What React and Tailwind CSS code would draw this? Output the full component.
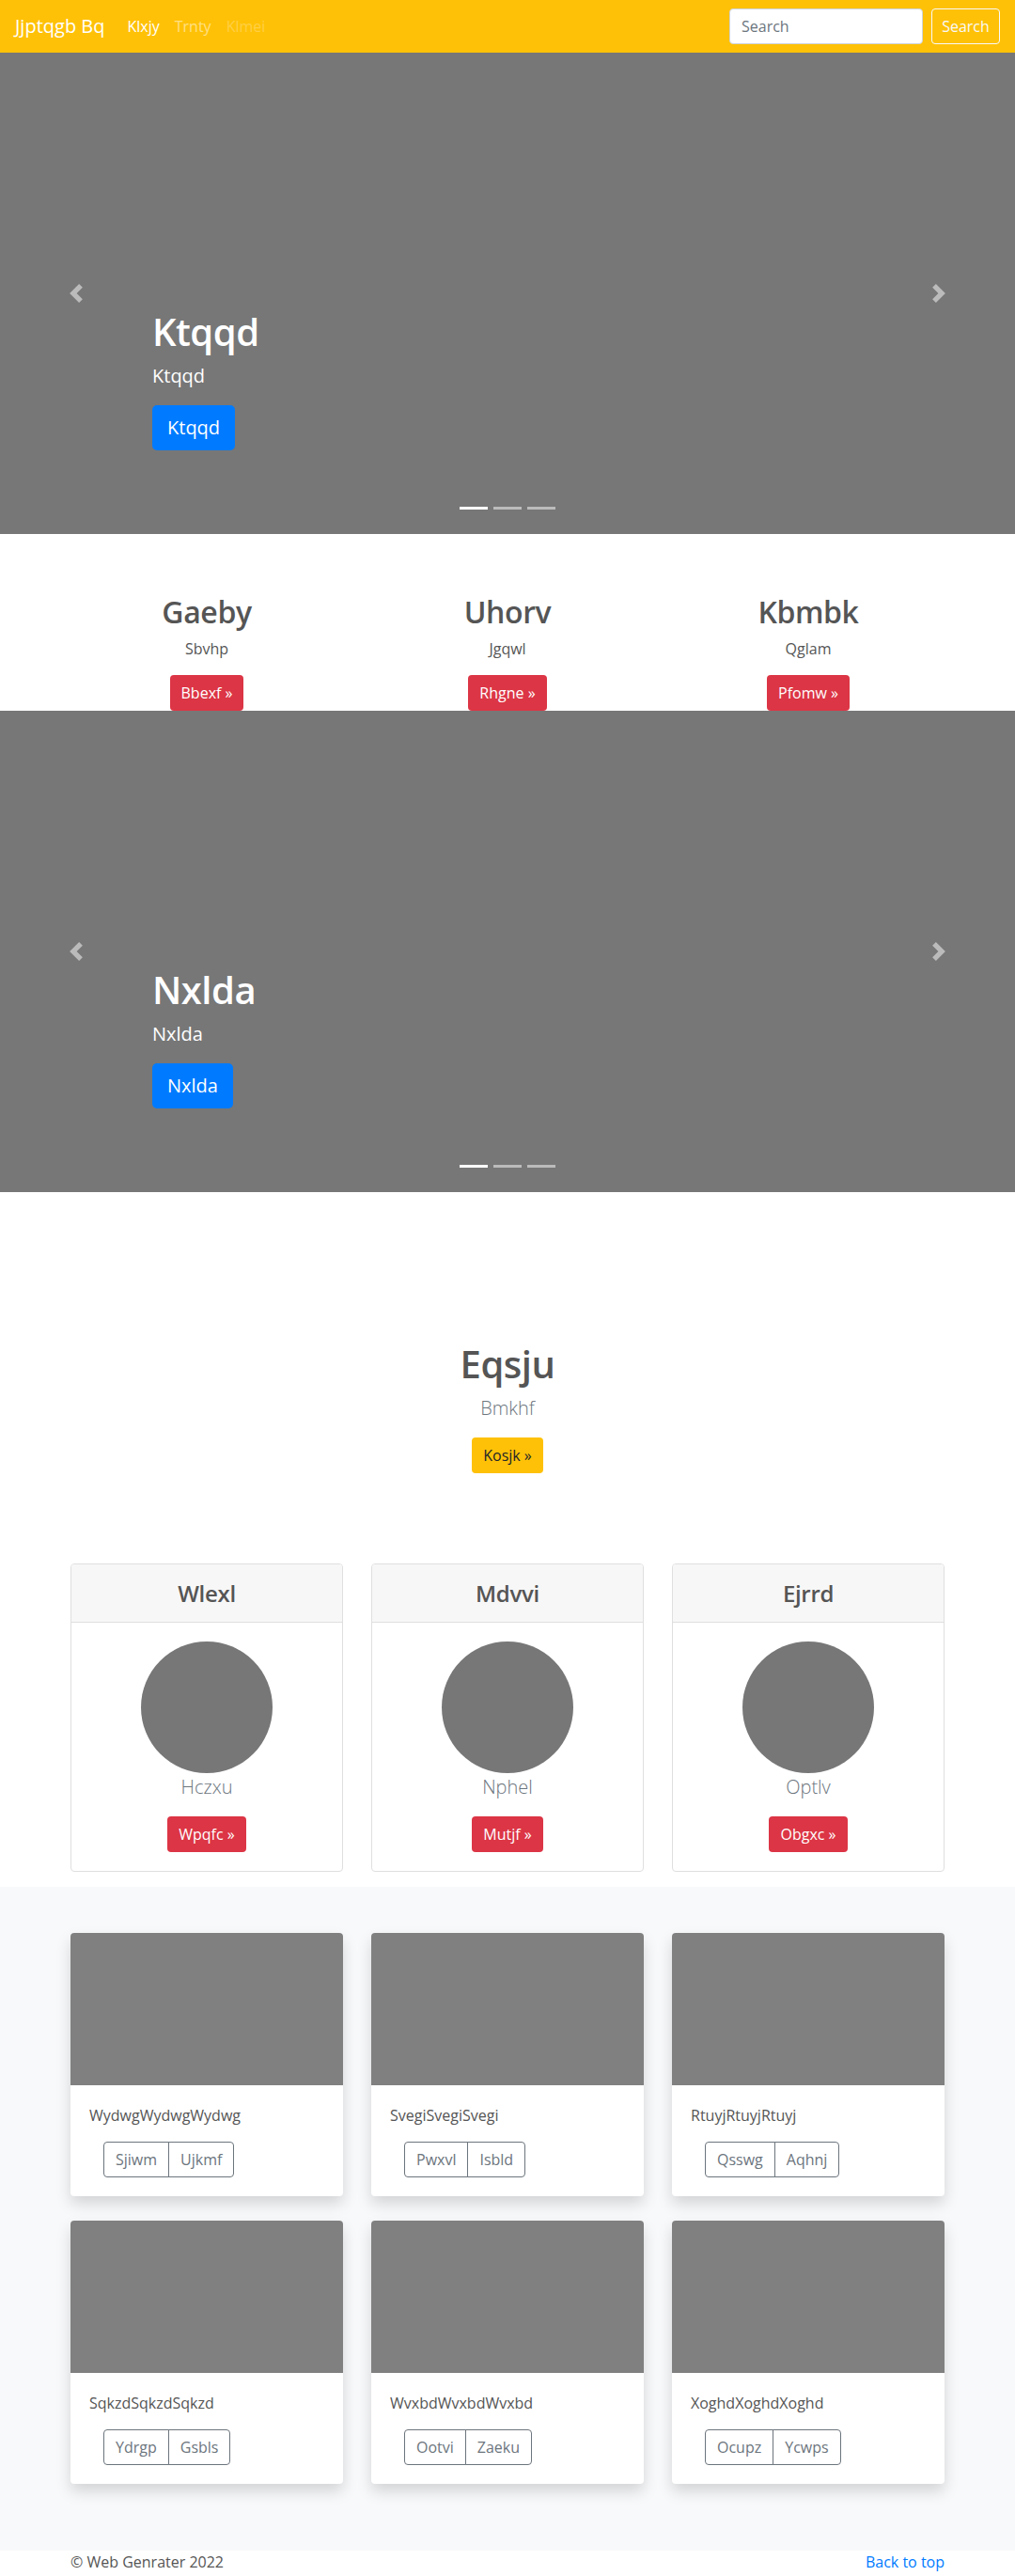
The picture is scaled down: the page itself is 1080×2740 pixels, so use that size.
import React from "react";

const FONT = "font-['Open_Sans','Noto_Sans','Liberation_Sans',sans-serif]";

function Chevron({ dir }) {
  return (
    <svg width="20" height="20" viewBox="0 0 8 8" fill="#fff" className="opacity-50">
      {dir === "left" ? (
        <path d="M5.25 0l-4 4 4 4 1.5-1.5-2.5-2.5 2.5-2.5-1.5-1.5z" />
      ) : (
        <path d="M2.75 0l-1.5 1.5 2.5 2.5-2.5 2.5 1.5 1.5 4-4-4-4z" />
      )}
    </svg>
  );
}

function Carousel({ title }) {
  return (
    <div className="relative h-[512px] bg-[#777] overflow-hidden">
      <div className="absolute left-0 top-0 h-full w-[15%] flex items-center justify-center">
        <Chevron dir="left" />
      </div>
      <div className="absolute right-0 top-0 h-full w-[15%] flex items-center justify-center">
        <Chevron dir="right" />
      </div>
      <div className="absolute left-[15%] right-[15%] top-[273px] text-left text-white">
        <h1 className="text-[40px] leading-[48px] font-semibold mb-2 tracking-[-0.5px]">{title}</h1>
        <p className="text-[20px] leading-[30px] mb-4">{title}</p>
        <span className="inline-flex items-center h-[48px] px-4 rounded-[5px] bg-[#007bff] text-[20px] text-white">
          {title}
        </span>
      </div>
      <div className="absolute left-0 right-0 top-[483px] flex justify-center gap-[6px]">
        <span className="w-[30px] h-[3px] bg-white" />
        <span className="w-[30px] h-[3px] bg-white/50" />
        <span className="w-[30px] h-[3px] bg-white/50" />
      </div>
    </div>
  );
}

function RedBtn({ children }) {
  return (
    <span className="inline-flex items-center h-[38px] px-3 rounded bg-[#dc3545] text-white text-[16px]">
      {children} &raquo;
    </span>
  );
}

const marketing = [
  ["Gaeby", "Sbvhp", "Bbexf"],
  ["Uhorv", "Jgqwl", "Rhgne"],
  ["Kbmbk", "Qglam", "Pfomw"],
];

const pricing = [
  ["Wlexl", "Hczxu", "Wpqfc"],
  ["Mdvvi", "Nphel", "Mutjf"],
  ["Ejrrd", "Optlv", "Obgxc"],
];

const album = [
  ["WydwgWydwgWydwg", "Sjiwm", "Ujkmf"],
  ["SvegiSvegiSvegi", "Pwxvl", "Isbld"],
  ["RtuyjRtuyjRtuyj", "Qsswg", "Aqhnj"],
  ["SqkzdSqkzdSqkzd", "Ydrgp", "Gsbls"],
  ["WvxbdWvxbdWvxbd", "Ootvi", "Zaeku"],
  ["XoghdXoghdXoghd", "Ocupz", "Ycwps"],
];

export default function App() {
  return (
    <div className={`${FONT} w-[1080px] min-h-[2740px] bg-white text-[16px] leading-[24px] text-[#555]`}>
      {/* Navbar */}
      <nav className="h-[56px] bg-[#ffc107] flex items-center px-4">
        <span className="text-[20px] leading-[30px] text-white mr-4">Jjptqgb Bq</span>
        <ul className="flex items-center">
          <li className="px-2 text-white">Klxjy</li>
          <li className="px-2 text-white/50">Trnty</li>
          <li className="px-2 text-white/25">Klmei</li>
        </ul>
        <div className="ml-auto flex items-center">
          <input
            placeholder="Search"
            className="w-[206px] h-[38px] rounded border border-[#ced4da] bg-white px-3 text-[16px] text-[#495057] placeholder:text-[#6c757d] mr-[9px] outline-none"
          />
          <span className="inline-flex items-center justify-center w-[73px] h-[38px] rounded border border-[#f8f9fa] text-[#f8f9fa]">
            Search
          </span>
        </div>
      </nav>

      <Carousel title="Ktqqd" />

      {/* Marketing */}
      <section className="h-[188px] pt-[64px]">
        <div className="w-[960px] mx-auto grid grid-cols-3 text-center">
          {marketing.map(([t, s, b]) => (
            <div key={t}>
              <h2 className="text-[32px] leading-[38px] font-semibold mb-2 text-[#555] tracking-[-0.4px]">{t}</h2>
              <p className="mb-4 text-[#555]">{s}</p>
              <RedBtn>{b}</RedBtn>
            </div>
          ))}
        </div>
      </section>

      <Carousel title="Nxlda" />

      {/* Jumbotron */}
      <section className="pt-[159px] text-center">
        <h1 className="text-[40px] leading-[48px] font-semibold mb-2 text-[#555] tracking-[-0.5px]">Eqsju</h1>
        <p className="text-[20px] leading-[30px] font-light text-[#6c757d] mb-4">Bmkhf</p>
        <span className="inline-flex items-center h-[38px] px-3 rounded bg-[#ffc107] text-[#212529]">
          Kosjk &raquo;
        </span>
      </section>

      {/* Pricing-like cards */}
      <section className="pt-[96px] pb-4">
        <div className="w-[930px] mx-auto grid grid-cols-3 gap-[30px]">
          {pricing.map(([t, s, b]) => (
            <div key={t} className="border border-[#dfdfdf] rounded text-center overflow-hidden">
              <div className="h-[62px] bg-[#f7f7f7] border-b border-[#dfdfdf] flex items-center justify-center">
                <h4 className="text-[24px] leading-[29px] font-semibold text-[#555] tracking-[-0.3px]">{t}</h4>
              </div>
              <div className="p-5">
                <div className="w-[140px] h-[140px] rounded-full bg-[#777] mx-auto" />
                <p className="text-[20px] leading-[30px] font-light text-[#6c757d] mb-4">{s}</p>
                <RedBtn>{b}</RedBtn>
              </div>
            </div>
          ))}
        </div>
      </section>

      {/* Album */}
      <section className="bg-[#f8f9fa] pt-[49px] pb-[71px]">
        <div className="w-[930px] mx-auto grid grid-cols-3 gap-x-[30px] gap-y-[26px]">
          {album.map(([t, a, b]) => (
            <div key={t} className="bg-white rounded overflow-hidden shadow-[0_8px_16px_rgba(0,0,0,0.15)]">
              <div className="h-[162px] bg-[#808080]" />
              <div className="p-5">
                <p className="mb-4 text-[#555]">{t}</p>
                <div className="inline-flex ml-[15px]">
                  <span className="inline-flex items-center h-[38px] px-3 border border-[#6c757d] rounded-l text-[#6c757d]">
                    {a}
                  </span>
                  <span className="inline-flex items-center h-[38px] px-3 border border-[#6c757d] -ml-px rounded-r text-[#6c757d]">
                    {b}
                  </span>
                </div>
              </div>
            </div>
          ))}
        </div>
      </section>

      {/* Footer */}
      <footer className="w-[930px] mx-auto flex justify-between">
        <p className="text-[#555]">&copy; Web Genrater 2022</p>
        <p className="text-[#007bff]">Back to top</p>
      </footer>
    </div>
  );
}
